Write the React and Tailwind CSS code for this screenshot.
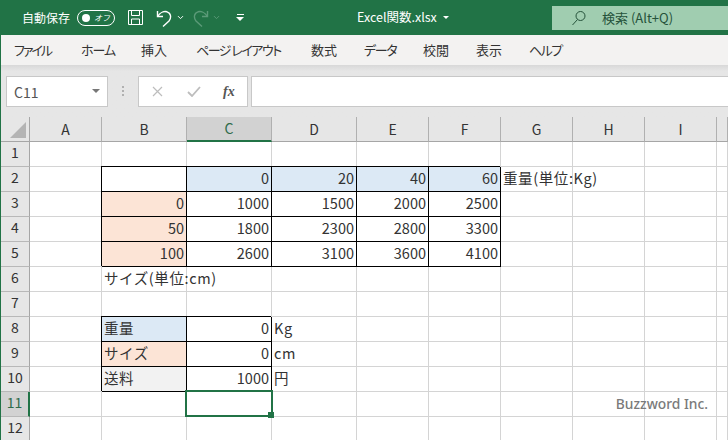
import { ChevronDown } from 'lucide-react';

const FONT = { fontFamily: '"Noto Sans CJK JP", "Liberation Sans", sans-serif' };

const COLS = ['A', 'B', 'C', 'D', 'E', 'F', 'G', 'H', 'I', ''];
const ROWS = [1, 2, 3, 4, 5, 6, 7, 8, 9, 10, 11, 12];
const TABS = [
  ['ファイル', 'w-[67px] tracking-[-2px]'],
  ['ホーム', 'w-[60px] tracking-[-1px]'],
  ['挿入', 'w-[55px]'],
  ['ページ レイアウト', 'w-[115px] tracking-[-1.5px]'],
  ['数式', 'w-[53px]'],
  ['データ', 'w-[59px] tracking-[-1.3px]'],
  ['校閲', 'w-[53px]'],
  ['表示', 'w-[53px]'],
  ['ヘルプ', 'w-[60px] tracking-[-1.5px]'],
];

const BLUE = 'bg-[#dce9f5]';
const ORANGE = 'bg-[#fce4d6]';
const GRAY = 'bg-[#f2f2f2]';

// cell contents keyed by "column+row"
const CELLS = {
  B2: { box: true },
  C2: { v: '0', fill: BLUE, box: true },
  D2: { v: '20', fill: BLUE, box: true },
  E2: { v: '40', fill: BLUE, box: true },
  F2: { v: '60', fill: BLUE, box: true },
  G2: { t: '重量(単位:Kg)' },
  B3: { v: '0', fill: ORANGE, box: true },
  C3: { v: '1000', box: true },
  D3: { v: '1500', box: true },
  E3: { v: '2000', box: true },
  F3: { v: '2500', box: true },
  B4: { v: '50', fill: ORANGE, box: true },
  C4: { v: '1800', box: true },
  D4: { v: '2300', box: true },
  E4: { v: '2800', box: true },
  F4: { v: '3300', box: true },
  B5: { v: '100', fill: ORANGE, box: true },
  C5: { v: '2600', box: true },
  D5: { v: '3100', box: true },
  E5: { v: '3600', box: true },
  F5: { v: '4100', box: true },
  B6: { t: 'サイズ(単位:cm)' },
  B8: { t: '重量', fill: BLUE, box: true },
  C8: { v: '0', box: true },
  D8: { t: 'Kg' },
  B9: { t: 'サイズ', fill: ORANGE, box: true },
  C9: { v: '0', box: true },
  D9: { t: 'cm' },
  B10: { t: '送料', fill: GRAY, box: true },
  C10: { v: '1000', box: true },
  D10: { t: '円' },
};

const Cell = ({ id }) => {
  const cell = CELLS[id] || {};
  const selected = id === 'C11';
  const border = cell.box
    ? 'border-r border-b border-[#000] shadow-[-1px_-1px_0_#000]'
    : 'border-r border-b border-[#d4d4d4]';
  return (
    <div className={`relative flex items-center min-w-0 whitespace-nowrap text-[14.5px] text-[#333] pb-[3px] ${border} ${cell.fill || ''} ${cell.v ? 'justify-end pr-[2px]' : 'pl-[2px] tracking-[0.6px]'} ${cell.box ? 'z-[1]' : ''}`}>
      {cell.v || cell.t}
      {selected && (
        <div className="absolute -left-[2px] -top-[2px] w-[88px] h-[27px] border-2 border-[#217346] z-10">
          <div className="absolute -right-[3px] -bottom-[3px] w-[6px] h-[6px] bg-[#217346]" />
        </div>
      )}
    </div>
  );
};

const Sheet = () => (
  <div className="relative flex-1 overflow-hidden grid grid-cols-[29px_72px_85px_85px_85px_72px_72px_72px_72px_72px_11px] grid-rows-[repeat(13,25px)] bg-white border-l border-[#217346]" style={FONT}>
    <div className="relative bg-[#e6e6e6] border-r border-b border-[#a6a6a6]">
      <div className="absolute right-[3px] bottom-[3px] w-0 h-0 border-l-[16px] border-l-transparent border-b-[16px] border-b-[#b4b4b4]" />
    </div>
    {COLS.map((c) => (
      <div key={c || 'J'} className={`flex items-center justify-center text-[14px] border-r border-[#b0b0b0] ${c === 'C' ? 'bg-[#d2d2d2] border-b-2 border-b-[#217346] text-[#2f6b4b]' : 'bg-[#e6e6e6] border-b border-b-[#a6a6a6] text-[#333]'}`}>
        {c}
      </div>
    ))}
    {ROWS.map((r) => (
      <div key={r} className="contents">
        <div className={`flex items-center justify-center text-[14px] pb-[3px] border-b border-[#b8b8b8] ${r === 11 ? 'bg-[#d2d2d2] border-r-2 border-r-[#217346] text-[#2f6b4b]' : 'bg-[#e6e6e6] border-r border-r-[#a6a6a6] text-[#333]'}`}>
          {r}
        </div>
        {COLS.map((c) => (
          <Cell key={c + r} id={c + r} />
        ))}
      </div>
    ))}
    <div className="absolute right-[20px] bottom-[25px] z-20 text-[13.8px] font-medium text-[#7a7a7a]" style={{ fontFamily: '"Noto Sans", sans-serif' }}>
      Buzzword Inc.
    </div>
  </div>
);

const SaveIcon = () => (
  <svg width="17" height="17" viewBox="0 0 17 17" fill="none" stroke="#fff" strokeWidth="1">
    <path d="M1.5 1.5h14v14h-14z" />
    <path d="M4.5 1.5v5h8v-5M4.5 15.5v-5.5h8v5.5" />
  </svg>
);

const UndoIcon = ({ color }) => (
  <svg width="17" height="18" viewBox="0 0 17 18" fill="none" stroke={color} strokeWidth="1.4">
    <path d="M1.5 2v5.5h5.5" />
    <path d="M1.8 7.2C4 3.4 8 2 11 2.8c4 1.2 4.6 6 2 9.2l-6 5.5" />
  </svg>
);

const RedoIcon = ({ color }) => (
  <svg width="17" height="18" viewBox="0 0 17 18" fill="none" stroke={color} strokeWidth="1.4">
    <path d="M15.5 2v5.5h-5.5" />
    <path d="M15.2 7.2C13 3.4 9 2 6 2.8c-4 1.2-4.6 6-2 9.2l6 5.5" />
  </svg>
);

const TitleBar = () => (
  <div className="relative flex items-center h-[35px] bg-[#217346] text-white shrink-0">
    <span className="ml-[22px] w-[55px] text-[12px] whitespace-nowrap">自動保存</span>
    <div className="flex items-center justify-between w-[38px] h-[16px] rounded-full border border-white pl-[4px] pr-[4px]">
      <span className="w-[8px] h-[8px] rounded-full bg-white" />
      <span className="text-[8px] italic">オフ</span>
    </div>
    <div className="ml-[12px]"><SaveIcon /></div>
    <div className="ml-[12px]"><UndoIcon color="#fff" /></div>
    <ChevronDown size={9} strokeWidth={2.5} className="ml-[3px]" />
    <div className="ml-[7px]"><RedoIcon color="#5b9a78" /></div>
    <ChevronDown size={9} strokeWidth={2.5} className="ml-[3px] text-[#5b9a78]" />
    <div className="ml-[15px] flex flex-col items-center gap-[2px]">
      <span className="w-[7px] h-[1px] bg-white" />
      <span className="w-0 h-0 border-x-[4px] border-x-transparent border-t-[4px] border-t-white" />
    </div>
    <span className="ml-[113px] text-[12.5px] whitespace-nowrap">Excel関数.xlsx</span>
    <span className="ml-[6px] w-0 h-0 border-x-[3px] border-x-transparent border-t-[3px] border-t-white" />
    <div className="absolute left-[552px] top-[6px] right-0 h-[24px] bg-[#a0cdb0] flex items-center text-[#25523a] text-[13px]">
      <svg className="ml-[19px]" width="16" height="16" viewBox="0 0 16 16" fill="none" stroke="#25523a" strokeWidth="1">
        <circle cx="9.5" cy="6" r="4.5" />
        <path d="M6.5 9.5L1.5 15" />
      </svg>
      <span className="ml-[15px] whitespace-nowrap">検索 (Alt+Q)</span>
    </div>
  </div>
);

const RibbonTabs = () => (
  <div className="flex items-center h-[30px] pl-[13px] bg-[#f3f2f1] text-[13px] text-[#333] shrink-0 border-l border-[#217346] [font-feature-settings:'palt']">
    {TABS.map(([label, cls]) => (
      <span key={label} className={`${cls} whitespace-nowrap shrink-0`}>{label}</span>
    ))}
  </div>
);

const FormulaBar = () => (
  <div className="flex items-center h-[52px] shrink-0 border-l border-[#217346] bg-gradient-to-b from-[#d8d8d8] to-[#e6e6e6] to-[6px] pt-[6px] pb-[6px] pl-[5px]">
    <div className="flex items-center justify-between w-[102px] h-[31px] bg-white border border-[#c8c8c8] pl-[7px] pr-[7px] text-[14px] text-[#555]">
      <span className="pt-[3px]">C11</span>
      <span className="w-0 h-0 border-x-[4px] border-x-transparent border-t-[4px] border-t-[#777]" />
    </div>
    <div className="ml-[14px] flex flex-col gap-[2px]">
      <span className="w-[2px] h-[2px] bg-[#b0b0b0]" />
      <span className="w-[2px] h-[2px] bg-[#b0b0b0]" />
      <span className="w-[2px] h-[2px] bg-[#b0b0b0]" />
    </div>
    <div className="ml-[14px] flex items-center w-[110px] h-[31px] bg-white border border-[#c8c8c8]">
      <svg className="ml-[13px]" width="11" height="11" viewBox="0 0 11 11" stroke="#bdbdbd" strokeWidth="1.2">
        <path d="M1 1l9 9M10 1l-9 9" />
      </svg>
      <svg className="ml-[24px]" width="14" height="11" viewBox="0 0 14 11" fill="none" stroke="#bdbdbd" strokeWidth="1.8">
        <path d="M1 6l4 4 8-9" />
      </svg>
      <span className="ml-[22px] text-[14px] italic font-semibold text-[#555]" style={{ fontFamily: '"Liberation Serif", serif' }}>fx</span>
    </div>
    <div className="ml-[3px] flex-1 h-[31px] bg-white border border-[#c8c8c8] border-r-0" />
  </div>
);

export default function App() {
  return (
    <div className="w-[728px] h-[440px] overflow-hidden flex flex-col bg-white" style={FONT}>
      <TitleBar />
      <RibbonTabs />
      <FormulaBar />
      <Sheet />
    </div>
  );
}
